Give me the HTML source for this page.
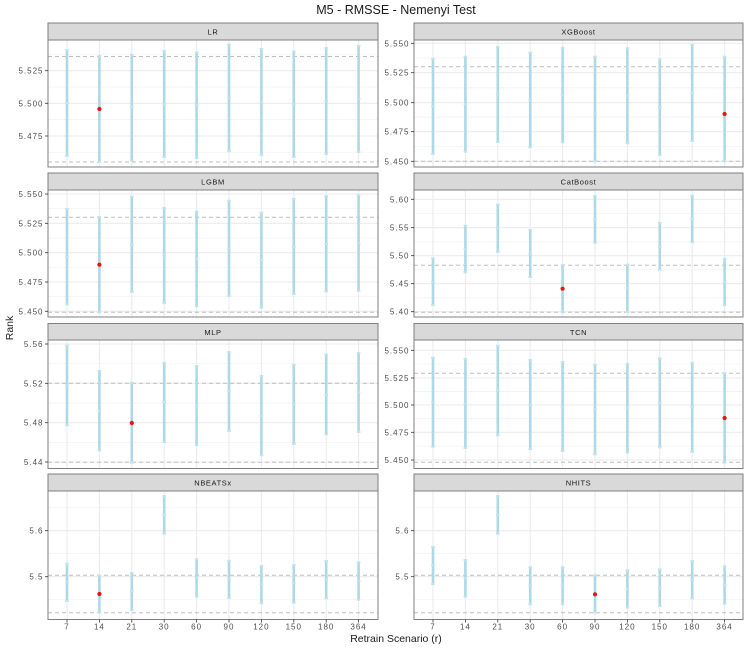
<!DOCTYPE html>
<html><head><meta charset="utf-8"><style>
html,body{margin:0;padding:0;background:#fff;}
svg{display:block;font-family:"Liberation Sans","DejaVu Sans",sans-serif;}
</style></head><body>
<svg id="s" width="750" height="650" xmlns="http://www.w3.org/2000/svg">
<rect width="750" height="650" fill="#fff"/>
<text x="396" y="14" font-size="12.5" text-anchor="middle" fill="#1a1a1a">M5 - RMSSE - Nemenyi Test</text>
<text x="396" y="642" font-size="10.5" text-anchor="middle" fill="#1a1a1a">Retrain Scenario (r)</text>
<text transform="translate(13,328) rotate(-90)" font-size="10.5" text-anchor="middle" fill="#1a1a1a">Rank</text>
</svg>
<script>
var L=[48,378],R=[414,743];
var rows=[[23,40,167],[173,190,317],[323.5,340,468.5],[474,491,619.5]];
var xl=["7","14","21","30","60","90","120","150","180","364"];
var P=[
{n:"LR",c:L,r:0,t:[["5.525",70.7],["5.500",103.3],["5.475",136]],d:[56.5,162],red:1,
b:[[50,103,156],[56,109,162],[54.7,107,160.7],[51,104,157],[52.5,105,158],[44.5,98,151],[49,102,155],[51.5,104.5,157],[48,101,154],[46,99,152]]},
{n:"XGBoost",c:R,r:0,t:[["5.550",43.3],["5.525",72.7],["5.500",102.7],["5.475",131.7],["5.450",161.3]],d:[66.7,161.3],red:9,
b:[[58.7,106.3,154],[56.7,104.3,151.7],[47,94.3,142],[52.7,100,147.3],[47.7,95,142.3],[56.7,113.3,161.3],[48.3,95.7,143.3],[59.3,107.3,155],[45,93,141],[56.7,114,161.3]]},
{n:"LGBM",c:L,r:1,t:[["5.550",194],["5.525",223.3],["5.500",252.7],["5.475",282],["5.450",311.3]],d:[217.3,312.3],red:1,
b:[[209,256.7,304.3],[217,264.7,312.3],[196.7,244.7,292],[208,255.7,303],[211.3,259,306.3],[200.7,248.7,296],[212.7,260,307.7],[199,246.7,294],[196,244,291.3],[195.3,243.3,290.7]]},
{n:"CatBoost",c:R,r:1,t:[["5.60",199.3],["5.55",227.7],["5.50",255.7],["5.45",283.7],["5.40",311.7]],d:[265.3,312.3],red:4,
b:[[258.3,282,305],[225.7,249.3,272.3],[204.7,228.3,252],[230,253.7,277],[265,288.7,312.3],[196,219.3,242.7],[264.7,288,312],[223,246.7,269.7],[195.7,219,242.3],[258.7,282,305.3]]},
{n:"MLP",c:L,r:2,t:[["5.56",344],["5.52",383.3],["5.48",422.7],["5.44",462]],d:[383.3,462.3],red:2,
b:[[345.7,385.7,425.3],[371,410.7,450.3],[382.7,423,462.7],[362.7,402,442],[366,406,445.3],[352,391.3,431],[376,416,455.3],[364.7,404.7,444],[354.7,395,434.3],[353,392.3,432]]},
{n:"TCN",c:R,r:2,t:[["5.550",350.3],["5.525",378],["5.500",405],["5.475",432.3],["5.450",460]],d:[373.3,462.3],red:9,
b:[[357.7,402.3,446.7],[359,403.7,448],[345.7,390.3,435.3],[360,404.7,449],[362,406.7,451],[364.7,409.3,454.3],[363.7,408,452.7],[358.3,402.7,447.3],[362.7,407.3,452],[373,418,462.7]]},
{n:"NBEATSx",c:L,r:3,t:[["5.6",530.7],["5.5",576.7]],d:[575.3,612.7],red:1,
b:[[563.7,582.3,601],[575.3,594,612.7],[573,591.3,610],[496,515,533.7],[559.3,577.7,596.7],[560.7,579.3,598],[566,584.3,603.3],[565,583.3,602.7],[561,579.7,598.3],[562.3,581,599.7]]},
{n:"NHITS",c:R,r:3,t:[["5.6",530.7],["5.5",576.7]],d:[575.3,612.7],red:5,
b:[[547,565.3,584],[560,578.3,596.7],[496,515,533.7],[567.3,585.7,604.3],[567.3,585.7,604.3],[575.3,594.3,612.7],[570.3,589,607.7],[569.3,587.7,606],[561,579.7,598.3],[566.3,585,603.7]]}
];
var h="";
P.forEach(function(p){
 var x0=p.c[0],x1=p.c[1],rw=rows[p.r],sy=rw[0],y0=rw[1],y1=rw[2];
 var xs=[];for(var i=0;i<10;i++)xs.push(x0+19+i*32.4);
 h+='<rect x="'+x0+'" y="'+y0+'" width="'+(x1-x0)+'" height="'+(y1-y0)+'" fill="#fff"/>';
 var s=p.t.length>1?p.t[1][1]-p.t[0][1]:46;
 var ys=p.t.map(function(t){return t[1]});
 var mins=[];ys.forEach(function(y){mins.push(y-s/2);mins.push(y+s/2);});
 mins.forEach(function(y){if(y>y0&&y<y1)h+='<line x1="'+x0+'" x2="'+x1+'" y1="'+y+'" y2="'+y+'" stroke="#f3f3f3" stroke-width="0.6"/>';});
 ys.forEach(function(y){h+='<line x1="'+x0+'" x2="'+x1+'" y1="'+y+'" y2="'+y+'" stroke="#ebebeb" stroke-width="1.1"/>';});
 xs.forEach(function(x){h+='<line x1="'+x+'" x2="'+x+'" y1="'+y0+'" y2="'+y1+'" stroke="#ebebeb" stroke-width="1.1"/>';});
 p.d.forEach(function(y){h+='<line x1="'+x0+'" x2="'+x1+'" y1="'+y+'" y2="'+y+'" stroke="#bdbdbd" stroke-width="1" stroke-dasharray="4,3"/>';});
 p.b.forEach(function(b,i){var x=xs[i];
  h+='<line x1="'+x+'" x2="'+x+'" y1="'+b[0]+'" y2="'+b[2]+'" stroke="#add8e6" stroke-width="2.6"/>';
  h+='<rect x="'+(x-1.8)+'" y="'+(b[0]-1)+'" width="3.6" height="2" fill="#c3e3ed"/>';
  h+='<rect x="'+(x-1.8)+'" y="'+(b[2]-1)+'" width="3.6" height="2" fill="#c3e3ed"/>';
  if(i==p.red)h+='<circle cx="'+x+'" cy="'+b[1]+'" r="2.1" fill="#ee1111"/>';
  else h+='<rect x="'+(x-1.8)+'" y="'+(b[1]-1)+'" width="3.6" height="2" fill="#c3e3ed"/>';
 });
 h+='<rect x="'+x0+'" y="'+y0+'" width="'+(x1-x0)+'" height="'+(y1-y0)+'" fill="none" stroke="#7f7f7f" stroke-width="1"/>';
 h+='<rect x="'+x0+'" y="'+sy+'" width="'+(x1-x0)+'" height="'+(y0-sy)+'" fill="#d9d9d9" stroke="#7f7f7f" stroke-width="1"/>';
 h+='<text x="'+((x0+x1)/2)+'" y="'+(sy+(y0-sy)/2+3)+'" font-size="7.5" letter-spacing="0.6" text-anchor="middle" fill="#1a1a1a">'+p.n+'</text>';
 p.t.forEach(function(t){
  h+='<line x1="'+(x0-3)+'" x2="'+x0+'" y1="'+t[1]+'" y2="'+t[1]+'" stroke="#333" stroke-width="0.8"/>';
  h+='<text x="'+(x0-4.5)+'" y="'+(t[1]+3)+'" font-size="8" letter-spacing="1" text-anchor="end" fill="#4d4d4d">'+t[0]+'</text>';
 });
 if(p.r==3){xs.forEach(function(x,i){
  h+='<line x1="'+x+'" x2="'+x+'" y1="'+y1+'" y2="'+(y1+3)+'" stroke="#333" stroke-width="0.8"/>';
  h+='<text x="'+x+'" y="'+(y1+10)+'" font-size="8" letter-spacing="1" text-anchor="middle" fill="#4d4d4d">'+xl[i]+'</text>';
 });}
});
document.getElementById("s").insertAdjacentHTML("beforeend",h);
</script>
</body></html>
